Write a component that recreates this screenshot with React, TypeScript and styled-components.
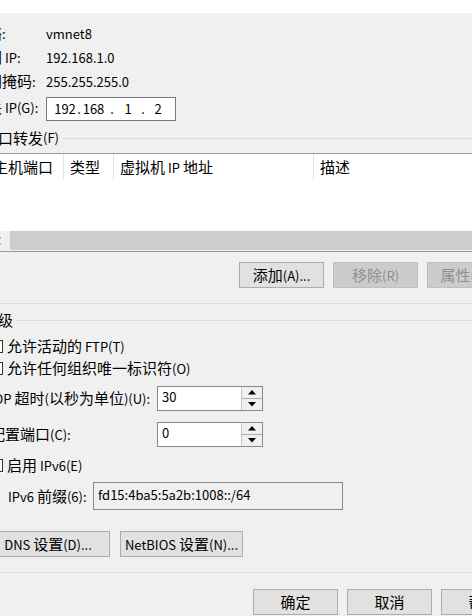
import React from "react";
import styled, { createGlobalStyle } from "styled-components";

const Global = createGlobalStyle`
  html, body { margin: 0; padding: 0; background: #f0f0f0; overflow: hidden; }
  body {
    font-family: "Noto Sans CJK SC", "Noto Sans", sans-serif;
    font-size: 15px;
    color: #000;
  }
  #root { width: 472px; height: 616px; overflow: hidden; }
`;

const Latin = styled.span`
  font-size: 13px;
`;

const CJK = /([\u2e80-\u9fff\uff00-\uffef\u3000-\u303f]+)/;

const Txt = ({ s }: { s: string }) => (
  <>
    {s
      .split(CJK)
      .filter((p) => p.length > 0)
      .map((p, i) =>
        CJK.test(p) ? <React.Fragment key={i}>{p}</React.Fragment> : <Latin key={i}>{p}</Latin>
      )}
  </>
);

const Dialog = styled.div`
  width: 560px;
  margin-left: -24px;
  display: flex;
  flex-direction: column;
`;

const TitleBar = styled.div`
  height: 13px;
  background: #fff;
  overflow: hidden;
  padding-left: 7px;
`;

const TitleText = styled.div`
  line-height: 20px;
  margin-top: -18px;
  white-space: nowrap;
`;

const InfoGrid = styled.div`
  display: grid;
  grid-template-columns: 74px auto;
  grid-template-rows: 24px 24px 24px 28px;
  align-items: center;
  justify-items: start;
  margin: 8px 0 0 -4px;
  line-height: 20px;
  white-space: nowrap;
`;

const IPBox = styled.div`
  align-self: end;
  box-sizing: border-box;
  width: 130px;
  height: 24px;
  border: 1px solid #7a7a7a;
  background: #fff;
  padding-left: 7px;
  display: flex;
  align-items: center;
  line-height: 20px;
  font-size: 13px;
`;

const IPPart = styled.span<{ $w: number }>`
  display: inline-block;
  width: ${(p) => p.$w}px;
  text-align: center;
`;

const Group = styled.section<{ $mt: number }>`
  margin: ${(p) => p.$mt}px 12px 0 0;
  border-bottom: 1px solid #dcdcdc;
  display: flex;
  flex-direction: column;
`;

const GroupHeader = styled.div`
  display: flex;
  align-items: center;
  height: 16px;
  line-height: 16px;
  padding-left: 7px;
  white-space: nowrap;
  &::after {
    content: "";
    flex: 1;
    height: 1px;
    background: #dcdcdc;
    margin-left: 3px;
  }
`;

const GroupBody = styled.div`
  display: flex;
  flex-direction: column;
  padding: 0 12px 15px 10px;
`;

const Table = styled.div`
  margin-top: 7px;
  border: 1px solid #9a9a9a;
  background: #fff;
  display: flex;
  flex-direction: column;
`;

const HeadRow = styled.div`
  display: grid;
  grid-template-columns: 77px 50px 200px 1fr;
  height: 25px;
`;

const HeadCell = styled.div`
  padding-left: 6px;
  line-height: 25px;
  border-right: 1px solid #e5e5e5;
  white-space: nowrap;
  &:last-child { border-right: none; }
`;

const TableBody = styled.div`
  height: 52px;
`;

const HScroll = styled.div`
  height: 20px;
  display: flex;
  background: #f0f0f0;
`;

const ScrollArrow = styled.div`
  width: 23px;
  display: flex;
  align-items: center;
  justify-content: center;
`;

const ScrollThumb = styled.div`
  flex: 1;
  background: #cdcdcd;
  margin: 0 0 1px 0;
`;

const ButtonRow = styled.div<{ $mt: number; $end?: boolean }>`
  display: flex;
  justify-content: ${(p) => (p.$end ? "flex-end" : "flex-start")};
  gap: ${(p) => (p.$end ? 9 : 10)}px;
  margin-top: ${(p) => p.$mt}px;
`;

const FooterRow = styled(ButtonRow)`
  padding-right: 10px;
`;

const Button = styled.button<{ $w?: number }>`
  box-sizing: border-box;
  width: ${(p) => p.$w ?? 85}px;
  height: 26px;
  padding: 0;
  background: #e1e1e1;
  border: 1px solid #adadad;
  border-radius: 0;
  font-family: inherit;
  font-size: 15px;
  line-height: 20px;
  color: #000;
  white-space: nowrap;
  overflow: hidden;
  &:disabled {
    background: #cccccc;
    border-color: #bfbfbf;
    color: #8f8f8f;
  }
`;

const CheckRow = styled.label<{ $mt: number }>`
  display: flex;
  align-items: center;
  gap: 4px;
  height: 22px;
  margin-top: ${(p) => p.$mt}px;
  line-height: 20px;
  white-space: nowrap;
`;

const CheckBox = styled.span`
  box-sizing: border-box;
  width: 13px;
  height: 13px;
  margin-left: 4px;
  border: 1px solid #333;
  background: #fff;
`;

const FieldRow = styled.div<{ $mt: number; $label: number }>`
  display: grid;
  grid-template-columns: ${(p) => p.$label}px auto;
  align-items: center;
  margin-top: ${(p) => p.$mt}px;
  line-height: 20px;
`;

const FieldLabel = styled.span<{ $shift: number }>`
  margin-left: ${(p) => p.$shift}px;
  white-space: nowrap;
`;

const Spin = styled.div`
  box-sizing: border-box;
  width: 106px;
  height: 25px;
  border: 1px solid #8a8a8a;
  background: #fff;
  display: flex;
`;

const SpinValue = styled.div`
  flex: 1;
  padding: 0 0 0 4px;
  line-height: 20px;
  font-size: 13px;
`;

const SpinButtons = styled.div`
  width: 20px;
  display: flex;
  flex-direction: column;
  border-left: 1px solid #c4c4c4;
`;

const SpinBtn = styled.div`
  flex: 1;
  display: flex;
  align-items: center;
  justify-content: center;
  background: #f0f0f0;
  border-bottom: 1px solid #adadad;
  &:last-child { border-bottom: none; }
`;

const PrefixBox = styled.div`
  box-sizing: border-box;
  width: 250px;
  height: 28px;
  border: 1px solid #8a8a8a;
  background: #f0f0f0;
  padding: 2px 0 0 4px;
  line-height: 20px;
  font-size: 13px;
`;

const Chevron = () => (
  <svg width="6" height="8" viewBox="0 0 6 8">
    <path d="M4.5 0.5 L1 4 L4.5 7.5" fill="none" stroke="#606060" strokeWidth="1.2" />
  </svg>
);

const Arrow = ({ down }: { down?: boolean }) => (
  <svg width="8" height="5" viewBox="0 0 8 5">
    <path d={down ? "M0 0 H8 L4 4.5 Z" : "M0 4.5 H8 L4 0 Z"} fill="#000" />
  </svg>
);

const SpinBox = ({ value }: { value: string }) => (
  <Spin>
    <SpinValue>{value}</SpinValue>
    <SpinButtons>
      <SpinBtn>
        <Arrow />
      </SpinBtn>
      <SpinBtn>
        <Arrow down />
      </SpinBtn>
    </SpinButtons>
  </Spin>
);

export default function App() {
  return (
    <>
      <Global />
      <Dialog>
        <TitleBar>
          <TitleText>
            <Txt s="NAT 设置" />
          </TitleText>
        </TitleBar>
        <InfoGrid>
          <span><Txt s="网络:" /></span>
          <span><Txt s="vmnet8" /></span>
          <span><Txt s="子网 IP:" /></span>
          <span><Txt s="192.168.1.0" /></span>
          <span><Txt s="子网掩码:" /></span>
          <span><Txt s="255.255.255.0" /></span>
          <span><Txt s="网关 IP(G):" /></span>
          <IPBox>
            <IPPart $w={22}>192</IPPart>
            <IPPart $w={6}>.</IPPart>
            <IPPart $w={23}>168</IPPart>
            <IPPart $w={14}>.</IPPart>
            <IPPart $w={18}>1</IPPart>
            <IPPart $w={12}>.</IPPart>
            <IPPart $w={18}>2</IPPart>
          </IPBox>
        </InfoGrid>

        <Group $mt={9}>
          <GroupHeader><Txt s="端口转发(F)" /></GroupHeader>
          <GroupBody>
            <Table>
              <HeadRow>
                <HeadCell>主机端口</HeadCell>
                <HeadCell>类型</HeadCell>
                <HeadCell><Txt s="虚拟机 IP 地址" /></HeadCell>
                <HeadCell>描述</HeadCell>
              </HeadRow>
              <TableBody />
              <HScroll>
                <ScrollArrow>
                  <Chevron />
                </ScrollArrow>
                <ScrollThumb />
              </HScroll>
            </Table>
            <ButtonRow $mt={10} $end>
              <Button><Txt s="添加(A)..." /></Button>
              <Button disabled><Txt s="移除(R)" /></Button>
              <Button disabled><Txt s="属性(P)..." /></Button>
            </ButtonRow>
          </GroupBody>
        </Group>

        <Group $mt={8}>
          <GroupHeader>高级</GroupHeader>
          <GroupBody>
            <CheckRow $mt={7}>
              <CheckBox />
              <span><Txt s="允许活动的 FTP(T)" /></span>
            </CheckRow>
            <CheckRow $mt={0}>
              <CheckBox />
              <span><Txt s="允许任何组织唯一标识符(O)" /></span>
            </CheckRow>
            <FieldRow $mt={7} $label={171}>
              <FieldLabel $shift={-1}><Txt s="UDP 超时(以秒为单位)(U):" /></FieldLabel>
              <SpinBox value="30" />
            </FieldRow>
            <FieldRow $mt={11} $label={171}>
              <FieldLabel $shift={4}><Txt s="配置端口(C):" /></FieldLabel>
              <SpinBox value="0" />
            </FieldRow>
            <CheckRow $mt={7}>
              <CheckBox />
              <span><Txt s="启用 IPv6(E)" /></span>
            </CheckRow>
            <FieldRow $mt={6} $label={107}>
              <FieldLabel $shift={22}><Txt s="IPv6 前缀(6):" /></FieldLabel>
              <PrefixBox>fd15:4ba5:5a2b:1008::/64</PrefixBox>
            </FieldRow>
            <ButtonRow $mt={21}>
              <Button $w={124}><Txt s="DNS 设置(D)..." /></Button>
              <Button $w={123}><Txt s="NetBIOS 设置(N)..." /></Button>
            </ButtonRow>
          </GroupBody>
        </Group>

        <FooterRow $mt={16} $end>
          <Button>确定</Button>
          <Button>取消</Button>
          <Button>帮助</Button>
        </FooterRow>
      </Dialog>
    </>
  );
}
